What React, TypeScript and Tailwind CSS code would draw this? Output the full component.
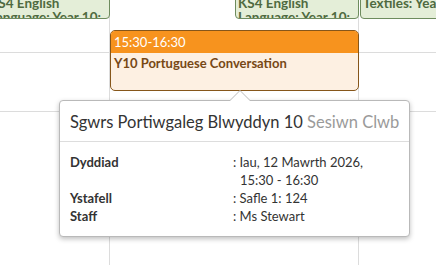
import { Fragment } from 'react';

const details = [
  { label: 'Dyddiad', lines: ['Iau, 12 Mawrth 2026,', '15:30 - 16:30'] },
  { label: 'Ystafell', lines: ['Safle 1: 124'] },
  { label: 'Staff', lines: ['Ms Stewart'] },
];

function GreenCard({ title, sub, className }: { title: string; sub: string; className: string }) {
  return (
    <div
      className={`h-[34px] -mt-[15px] overflow-hidden rounded-b-[4px] border border-[#6e8c5e] bg-[#e4eed8] pl-[2px] pt-[10px] text-[13.5px] font-bold leading-[14px] text-[#4f6a40] whitespace-nowrap ${className}`}
    >
      <div>{title}</div>
      <div>{sub}</div>
    </div>
  );
}

export default function App() {
  return (
    <div className="relative h-[265px] w-[436px] overflow-hidden bg-white font-['Lato',sans-serif]">
      <div className="flex h-full">
        {/* first day column */}
        <div className="w-[110px] shrink-0 border-r border-[#dcdcdc]">
          <GreenCard title="KS4 English" sub="Language: Year 10:" className="-ml-[14px] -mr-px" />
          <div className="mt-[33px] h-[59px] border-t border-[#dcdcdc]" />
          <div className="border-t border-[#dcdcdc]" />
        </div>

        {/* middle column */}
        <div className="w-[249px] shrink-0 border-r border-[#dcdcdc]">
          <GreenCard title="KS4 English" sub="Language: Year 10:" className="ml-[125px] -mr-px" />
          <div className="mt-[11px] -mr-px overflow-hidden rounded-[5px] border border-[#86561a] bg-[#fdf0e2]">
            <div className="h-[22px] bg-[#f7931e] pl-[3px] text-[13px] leading-[22px] text-white">15:30-16:30</div>
            <div className="h-[37px] pl-[3px] pt-[2px] text-[13px] font-bold leading-[16px] text-[#774815]">
              Y10 Portuguese Conversation
            </div>
          </div>
        </div>

        {/* right column */}
        <div className="flex-1">
          <GreenCard title="Textiles: Year 10" sub="" className="ml-px -mr-[20px]" />
          <div className="mt-[33px] h-[59px] border-t border-[#dcdcdc]" />
          <div className="border-t border-[#dcdcdc]" />
        </div>
      </div>

      {/* popover */}
      <div className="absolute left-[59px] top-[100px] w-[351px] rounded-[4px] border border-[#b9b9b9] bg-white shadow-[0_2px_5px_rgba(0,0,0,0.25)]">
        <div className="absolute -top-[11px] left-[169px] h-0 w-0 border-x-[11px] border-b-[11px] border-x-transparent border-b-[#b9b9b9]" />
        <div className="absolute -top-[10px] left-[170px] h-0 w-0 border-x-[10px] border-b-[10px] border-x-transparent border-b-white" />
        <div className="h-[41px] whitespace-nowrap border-b border-[#dddddd] pl-[10px] pt-[10px] text-[16.5px] leading-[22px] text-[#333]">
          Sgwrs Portiwgaleg Blwyddyn 10 <span className="text-[#9a9a9a]">Sesiwn Clwb</span>
        </div>
        <div className="grid grid-cols-[163px_1fr] px-[10px] pb-[11px] pt-[11px] text-[13px] leading-[18px] text-[#333]">
          {details.map((d) => (
            <Fragment key={d.label}>
              <div className="font-bold">{d.label}</div>
              <div>
                {d.lines.map((l, i) => (
                  <div key={l} className={i > 0 ? 'pl-[7px]' : ''}>
                    {i === 0 ? ': ' : ''}
                    {l}
                  </div>
                ))}
              </div>
            </Fragment>
          ))}
        </div>
      </div>
    </div>
  );
}
